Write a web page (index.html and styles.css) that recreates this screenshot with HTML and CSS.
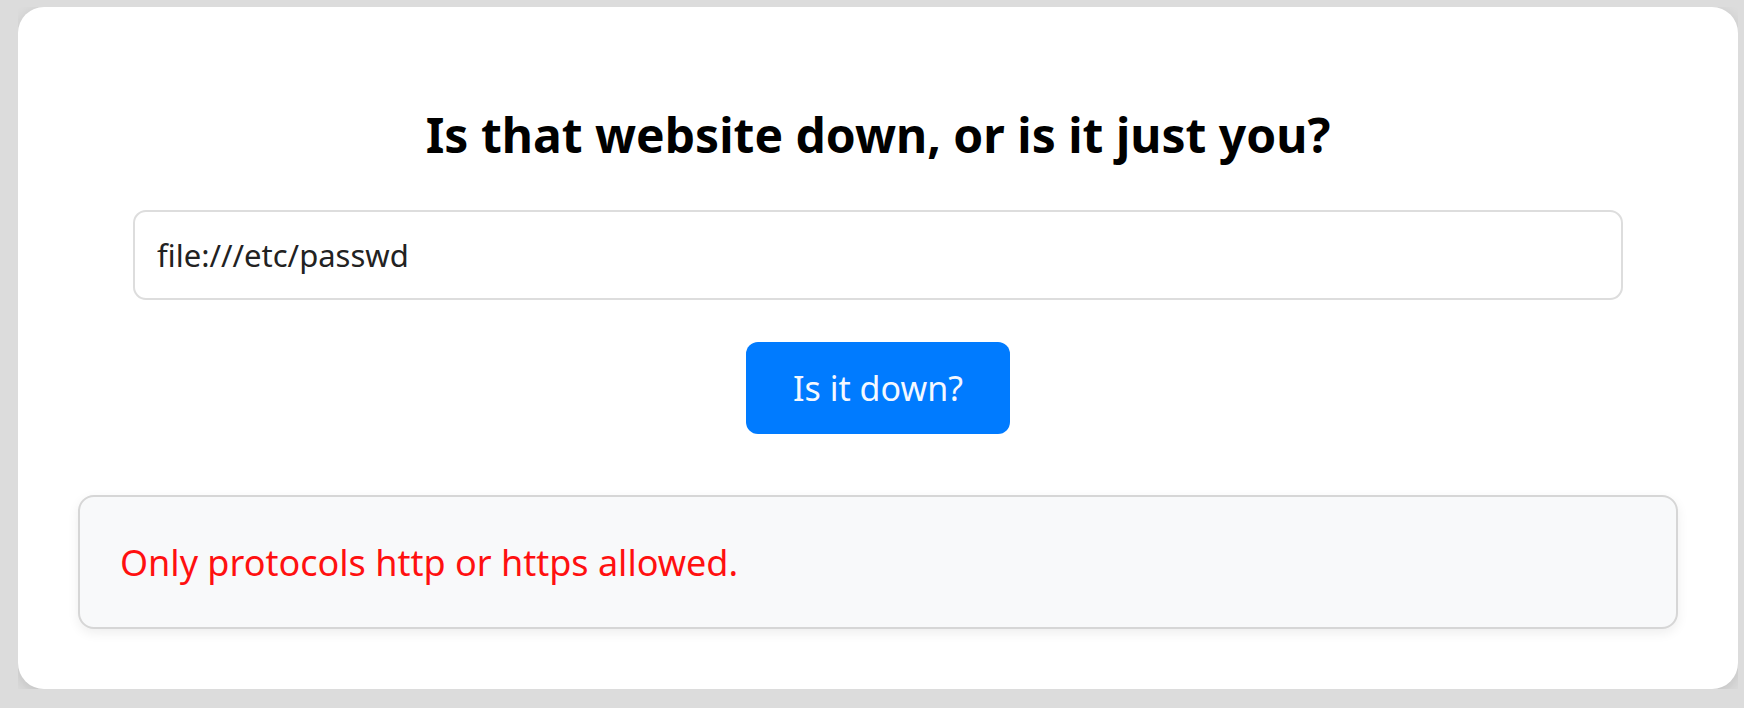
FILE: index.html
```html
<!DOCTYPE html>
<html lang="en">
<head>
<meta charset="utf-8">
<title>Is it down?</title>
<link rel="stylesheet" href="styles.css">
</head>
<body>
<main class="card">
  <h1 class="title">Is that website down, or is it just you?</h1>
  <form class="check-form">
    <input class="url-input" type="text" value="file:///etc/passwd">
    <button class="check-btn" type="button">Is it down?</button>
  </form>
  <div class="result">Only protocols http or https allowed.</div>
</main>
</body>
</html>
```
FILE: styles.css
```css
html, body {
  background: #dcdcdc;
}
body {
  margin: 7px 6px 19px 18px;
  font-family: "Noto Sans", "Open Sans", sans-serif;
}
.card {
  box-sizing: border-box;
  height: 682px;
  background: #ffffff;
  border-radius: 26px;
  box-shadow: 0 4px 14px rgba(0, 0, 0, 0.12);
  padding: 95px 60px 60px;
  display: flex;
  flex-direction: column;
  align-items: stretch;
}
.title {
  margin: 0;
  font-size: 48px;
  font-weight: 700;
  line-height: 65px;
  color: #000000;
  text-align: center;
}
.check-form {
  display: flex;
  flex-direction: column;
  align-items: center;
  margin: 43px 55px 0;
}
.url-input {
  box-sizing: border-box;
  width: 100%;
  height: 90px;
  border: 2px solid #dddddd;
  border-radius: 13px;
  padding: 0 22px;
  font-family: "Noto Sans", sans-serif;
  font-size: 31px;
  color: #222222;
  background: #ffffff;
  outline: none;
}
.check-btn {
  box-sizing: border-box;
  margin-top: 42px;
  width: 264px;
  height: 92px;
  border: none;
  border-radius: 12px;
  background: #007bff;
  color: #f4f8ff;
  font-family: "Noto Sans", sans-serif;
  font-size: 34px;
  font-weight: 400;
  padding: 0;
  cursor: pointer;
}
.result {
  box-sizing: border-box;
  margin-top: 61px;
  height: 134px;
  display: flex;
  align-items: center;
  padding: 0 40px;
  background: #f8f9fa;
  border: 2px solid #d6d6d6;
  border-radius: 16px;
  box-shadow: 0 4px 12px rgba(0, 0, 0, 0.07);
  color: #ff1010;
  font-size: 36px;
}
```
